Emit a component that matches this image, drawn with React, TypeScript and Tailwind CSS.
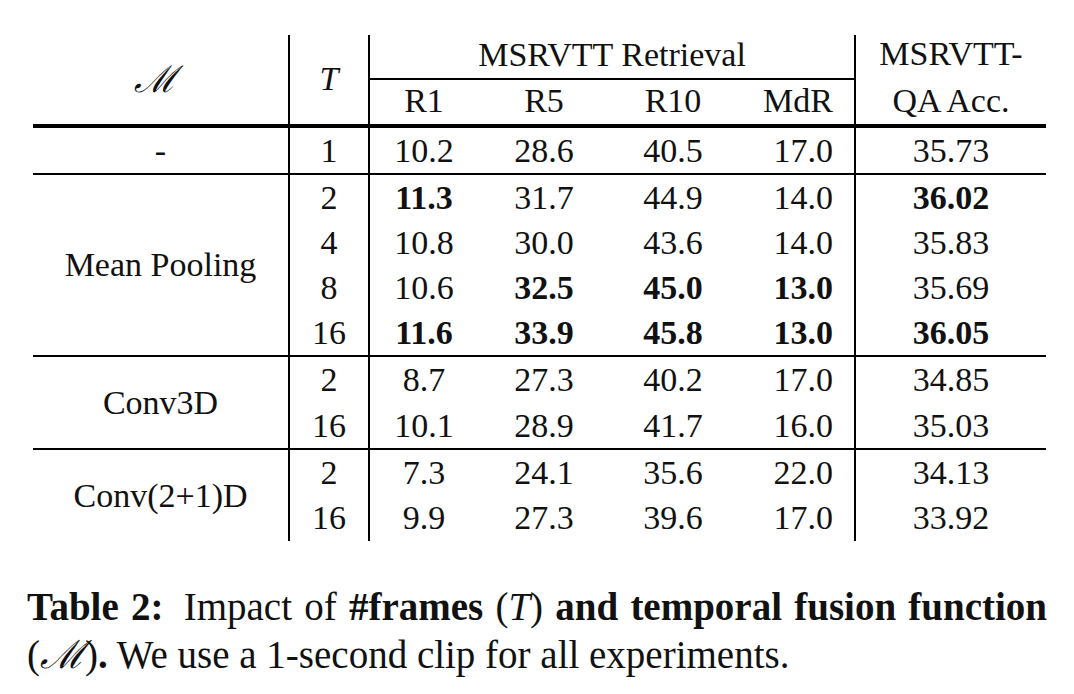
import React from "react";

type Row = { t: string; v: [string, boolean][] };

const groups: { label: React.ReactNode; rows: Row[] }[] = [
  {
    label: "-",
    rows: [{ t: "1", v: [["10.2", false], ["28.6", false], ["40.5", false], ["17.0", false], ["35.73", false]] }],
  },
  {
    label: "Mean Pooling",
    rows: [
      { t: "2", v: [["11.3", true], ["31.7", false], ["44.9", false], ["14.0", false], ["36.02", true]] },
      { t: "4", v: [["10.8", false], ["30.0", false], ["43.6", false], ["14.0", false], ["35.83", false]] },
      { t: "8", v: [["10.6", false], ["32.5", true], ["45.0", true], ["13.0", true], ["35.69", false]] },
      { t: "16", v: [["11.6", true], ["33.9", true], ["45.8", true], ["13.0", true], ["36.05", true]] },
    ],
  },
  {
    label: "Conv3D",
    rows: [
      { t: "2", v: [["8.7", false], ["27.3", false], ["40.2", false], ["17.0", false], ["34.85", false]] },
      { t: "16", v: [["10.1", false], ["28.9", false], ["41.7", false], ["16.0", false], ["35.03", false]] },
    ],
  },
  {
    label: "Conv(2+1)D",
    rows: [
      { t: "2", v: [["7.3", false], ["24.1", false], ["35.6", false], ["22.0", false], ["34.13", false]] },
      { t: "16", v: [["9.9", false], ["27.3", false], ["39.6", false], ["17.0", false], ["33.92", false]] },
    ],
  },
];

// Column alignment / vertical rule for the five value columns
const valueCols = [
  "justify-center",
  "justify-center",
  "justify-center",
  "justify-end pr-[21px] border-r-2",
  "justify-center",
];

const rowSpan: Record<number, string> = {
  1: "row-span-1",
  2: "row-span-2",
  4: "row-span-4",
};

function MathM() {
  return <span className="font-[family-name:DejaVu_Serif] italic font-normal">ℳ</span>;
}

export default function App() {
  return (
    <div className="w-[1074px] h-[694px] bg-white text-[#111] font-[family-name:Liberation_Serif] pt-[35px]">
      <div className="ml-[33px] grid grid-cols-[257px_80px_108px_132px_126px_120px_190px] grid-rows-[45px_48px_47px_45px_45px_45px_47px_46px_47px_45px_46px] text-[34px] leading-none">
        {/* header */}
        <div className="row-span-2 flex items-center justify-center border-r-2 border-b-4 border-black text-[37px] pr-[10px]">
          <MathM />
        </div>
        <div className="row-span-2 flex items-center justify-center border-r-2 border-b-4 border-black italic pb-[2px]">
          T
        </div>
        <div className="col-span-4 flex items-center justify-center border-r-2 border-b-2 border-black pb-[4px]">
          MSRVTT Retrieval
        </div>
        <div className="row-span-2 flex flex-col items-center justify-center border-b-4 border-black leading-[47px] pb-[6px]">
          <span>MSRVTT-</span>
          <span>QA Acc.</span>
        </div>
        <div className="flex items-center justify-center border-b-4 border-black pb-[2px]">R1</div>
        <div className="flex items-center justify-center border-b-4 border-black pb-[2px]">R5</div>
        <div className="flex items-center justify-center border-b-4 border-black pb-[2px]">R10</div>
        <div className="flex items-center justify-end pr-[21px] border-r-2 border-b-4 border-black pb-[2px]">MdR</div>

        {/* body */}
        {groups.map((g, gi) => {
          const last = gi === groups.length - 1;
          const bottom = last ? "" : "border-b-2";
          return (
            <React.Fragment key={gi}>
              <div className={`${rowSpan[g.rows.length]} flex items-center justify-center border-r-2 border-black ${bottom}`}>
                {g.label}
              </div>
              {g.rows.map((r, ri) => {
                const b = ri === g.rows.length - 1 ? bottom : "";
                return (
                  <React.Fragment key={ri}>
                    <div className={`flex items-center justify-center border-r-2 border-black ${b}`}>{r.t}</div>
                    {r.v.map(([val, bold], ci) => (
                      <div key={ci} className={`flex items-center border-black ${valueCols[ci]} ${b} ${bold ? "font-bold" : ""}`}>
                        {val}
                      </div>
                    ))}
                  </React.Fragment>
                );
              })}
            </React.Fragment>
          );
        })}
      </div>

      {/* caption */}
      <div className="ml-[27px] w-[1020px] mt-[42px] text-[39px] leading-[48px]">
        <div className="text-justify [text-align-last:justify] whitespace-nowrap">
          <span className="font-bold">Table 2:</span>
          {"  "}
          <span className="ml-[8px]">Impact of </span>
          <span className="font-bold">#frames </span>(<span className="italic">T</span>)
          <span className="font-bold"> and temporal fusion function</span>
        </div>
        <div>
          <span className="font-bold">
            <span className="font-normal">(</span>
            <MathM />
            <span className="font-normal">)</span>.
          </span>{" "}
          We use a 1-second clip for all experiments.
        </div>
      </div>
    </div>
  );
}
